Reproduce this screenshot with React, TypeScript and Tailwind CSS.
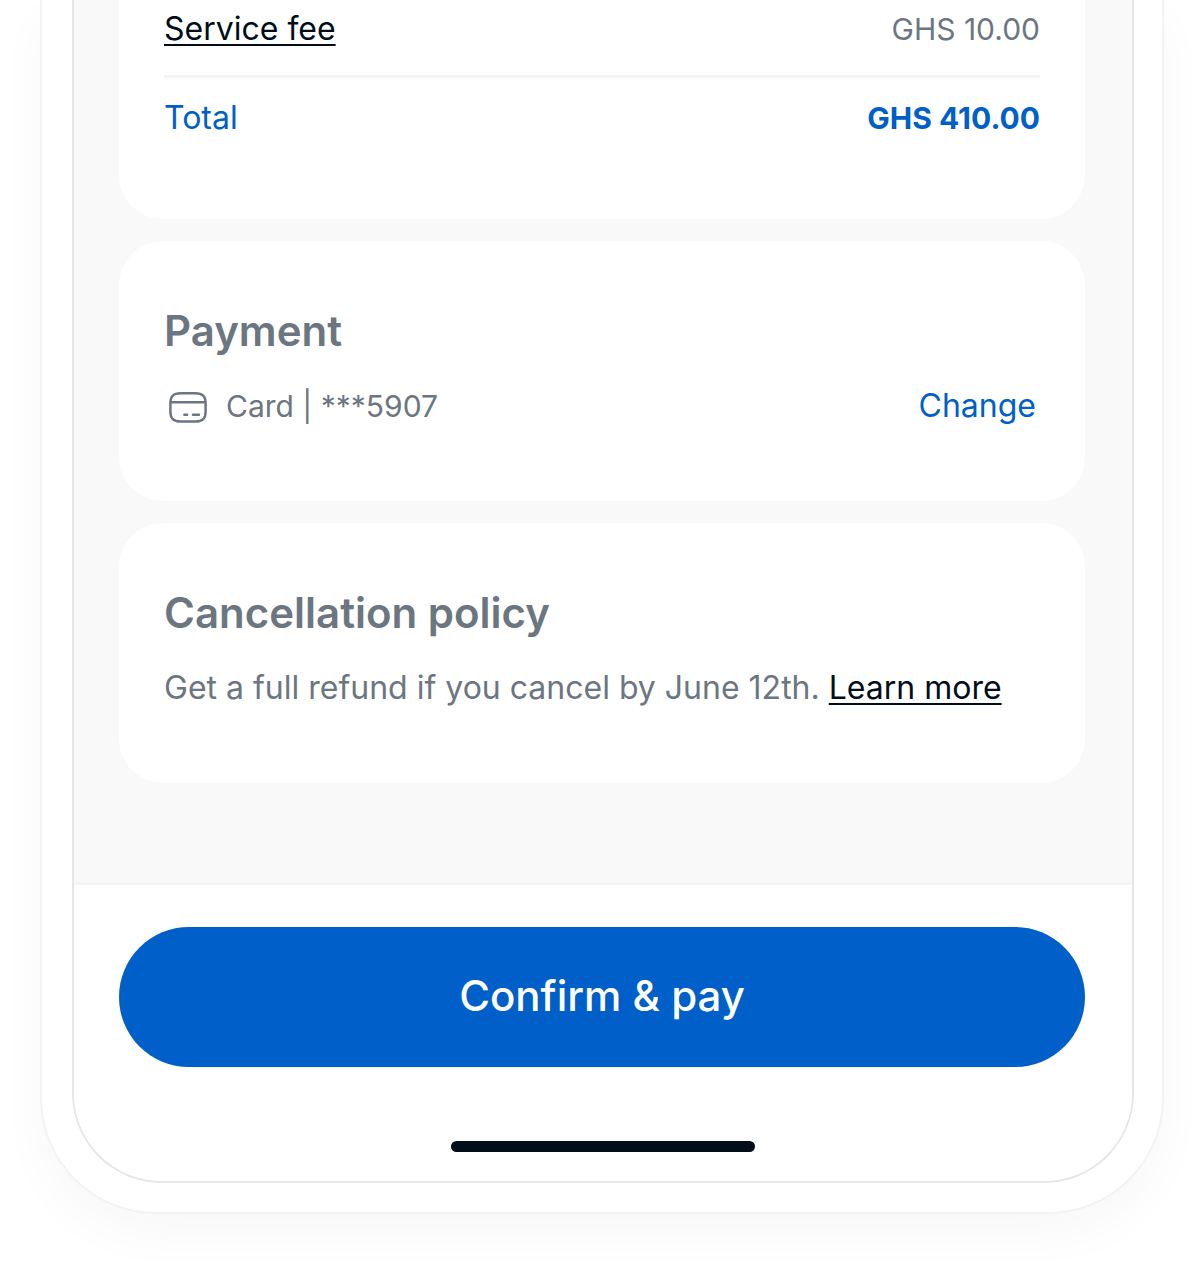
import type { ReactNode } from "react";

function CardIcon() {
  return (
    <svg
      viewBox="0 0 40 34"
      className="h-[34px] w-10 shrink-0"
      fill="none"
      stroke="currentColor"
      strokeWidth={2.5}
      strokeLinecap="round"
      aria-hidden="true"
    >
      <path d="M2.400 14C2.400 7 5.500 4.200 12.500 4.200h15C34.500 4.200 37.600 7 37.600 14v8.700c0 7-3.100 9.800-10.100 9.800h-15c-7 0-10.100-2.800-10.100-9.800z" />
      <path d="M2.500 13.200h35" strokeLinecap="butt" />
      <path d="M16.400 25.800h2.700M25 25.800h6" />
    </svg>
  );
}

function Card({ title, children }: { title: string; children: ReactNode }) {
  return (
    <section className="rounded-[44px] bg-white px-[45px] pt-[66px] pb-[71px]">
      <h2 className="text-[42px] leading-[48px] font-semibold">{title}</h2>
      <div className="mt-[27px] text-[32px] leading-[48px]">{children}</div>
    </section>
  );
}

export default function App() {
  return (
    <div className="overflow-hidden bg-white px-10 pb-[60px] font-['Inter',sans-serif] text-[#6c7681]">
      <div className="rounded-b-[116px] border-2 border-t-0 border-[#f3f3f3] bg-white pr-7 pb-[29px] pl-[30px] shadow-[0_20px_50px_rgba(0,0,0,0.03)]">
        <div className="overflow-hidden rounded-b-[90px] border-2 border-t-0 border-[#e6e6e6]">
          <main className="flex flex-col gap-[22px] border-b-3 border-[#f3f3f3] bg-[#f9f9f9] pr-[47px] pb-[99px] pl-[45px]">
            <section className="rounded-b-[44px] bg-white px-[45px] pt-[5px] pb-[77px] text-[32px] leading-[48px]">
              <div className="flex items-center justify-between border-b-3 border-[#f3f3f3] pb-[22px]">
                <a href="#service-fee" className="text-[#010e1a] underline decoration-2 underline-offset-4">
                  Service fee
                </a>
                <span className="text-[30px]">GHS 10.00</span>
              </div>
              <div className="flex items-center justify-between pt-4 text-[#005fc8]">
                <span>Total</span>
                <span className="text-[30px] font-bold">GHS 410.00</span>
              </div>
            </section>

            <Card title="Payment">
              <div className="flex items-center justify-between px-1">
                <div className="flex items-center gap-[18px]">
                  <CardIcon />
                  <span className="text-[30px]">Card | ***5907</span>
                </div>
                <button type="button" className="text-[#005fc8]">
                  Change
                </button>
              </div>
            </Card>

            <Card title="Cancellation policy">
              <p>
                Get a full refund if you cancel by June 12th.{" "}
                <a href="#policy" className="text-[#010e1a] underline decoration-2 underline-offset-4">
                  Learn more
                </a>
              </p>
            </Card>
          </main>

          <footer className="bg-white pt-[42px] pb-[29px]">
            <div className="pr-[47px] pl-[45px]">
              <button
                type="button"
                className="h-[140px] w-full rounded-full bg-[#005fc8] pb-1 text-[42px] font-medium text-white"
              >
                Confirm &amp; pay
              </button>
            </div>
            <div className="mx-auto mt-[74px] h-[11px] w-[304px] rounded-full bg-[#010e1a]" />
          </footer>
        </div>
      </div>
    </div>
  );
}
